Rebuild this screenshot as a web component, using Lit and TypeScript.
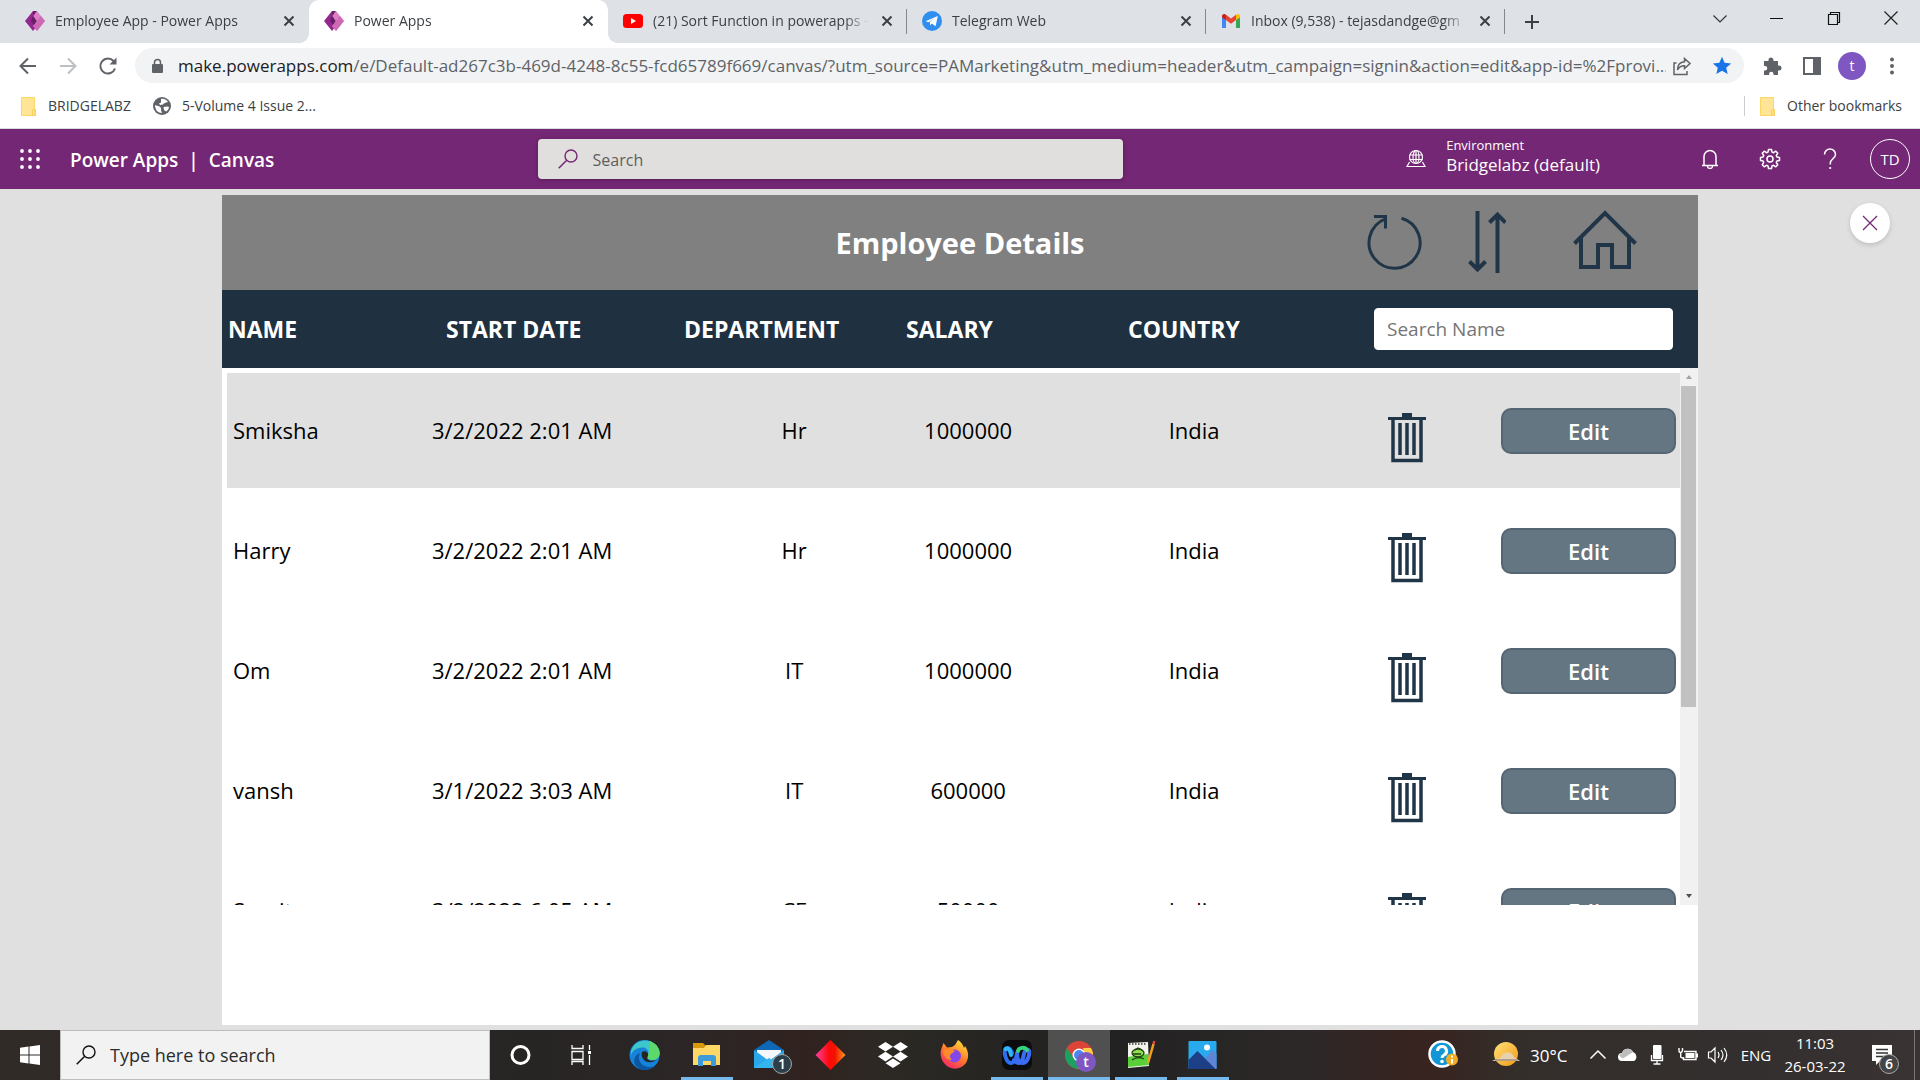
import { LitElement, html, css, svg, nothing } from "lit";
import { customElement } from "lit/decorators.js";
import { classMap } from "lit/directives/class-map.js";

const powerAppsIcon = html`<svg width="20" height="20" viewBox="0 0 20 20" aria-hidden="true">
  <path d="M8 0l4 5-4 5 4 5-4 5L0 10z" fill="#92278f" />
  <path d="M12 0l8 10-8 10-4-5 4-5-4-5z" fill="#dd7fc4" />
  <path d="M8 0h4L8 5l4 5-3 4-3-4 2-5z" fill="#6a1e66" />
  <path d="M12 10l4-5 4 5-8 10-4-5z" fill="#c861ae" opacity=".7" />
</svg>`;

const youtubeIcon = html`<svg width="20" height="20" viewBox="0 0 20 20" aria-hidden="true">
  <rect y="3" width="20" height="14" rx="3.5" fill="#f00" /><path d="M8 7l5 3-5 3z" fill="#fff" />
</svg>`;

const telegramIcon = html`<svg width="20" height="20" viewBox="0 0 20 20" aria-hidden="true">
  <circle cx="10" cy="10" r="10" fill="#2f8ff0" />
  <path d="M3.5 10.2L15.8 5 13.6 15.3 9.8 12.5 8 14.2V11l5-4.2-6.2 4.4z" fill="#fff" />
</svg>`;

const gmailIcon = html`<svg width="20" height="20" viewBox="0 0 20 20" aria-hidden="true">
  <path d="M1 5v12h4V8z" fill="#4285f4" /><path d="M19 5v12h-4V8z" fill="#34a853" />
  <path d="M1 5.5C1 3 3.500 2.500 5 3.700V9L1 6.500z" fill="#c5221f" />
  <path d="M19 5.500C19 3 16.500 2.500 15 3.700V9l4-2.500z" fill="#fbbc04" />
  <path d="M5 3.700L10 7.500l5-3.800V9l-5 3.800L5 9z" fill="#ea4335" />
</svg>`;

const tabCloseIcon = html`<svg width="16" height="16" viewBox="0 0 16 16" aria-hidden="true">
  <path d="M3.500 3.500l9 9m0-9l-9 9" stroke="#3c4043" stroke-width="2" />
</svg>`;

const folderIcon = html`<svg width="17" height="19" viewBox="0 0 17 19" aria-hidden="true">
  <path d="M1.500 .5h13v12h1v6h-14z" fill="#ffe595" stroke="#fbd766" />
  <path d="M12.500 18.500v-5q0-1 1-1h1.500v6z" fill="#ffe595" stroke="#f7cf55" />
</svg>`;

const globeIcon = html`<svg width="18" height="18" viewBox="0 0 18 18" aria-hidden="true">
  <circle cx="9" cy="9" r="9" fill="#5f6368" />
  <path d="M2 8c1.500 1 3 .5 4.500 1.500S8.500 12 8 13s1 1.500 1 3c-4 0-7-3-7-8z" fill="#fff" />
  <path d="M8 2c3-.7 6 1 7 3l-2 .5c-1 1-2.500.5-3 2L7 8 6 6.500l2-1z" fill="#fff" />
  <path d="M10.500 10l4-.5 1.500.5c-.3 2-1.500 3.500-3 4.500L11 13z" fill="#fff" />
</svg>`;

const icons = {
  back: html`<svg width="20" height="20" viewBox="0 0 20 20" aria-hidden="true"><path d="M18 10H3m7-7.500L2.500 10l7.500 7.500" fill="none" stroke="#5f6368" stroke-width="2" /></svg>`,
  forward: html`<svg width="20" height="20" viewBox="0 0 20 20" aria-hidden="true"><path d="M2 10h15m-7-7.500l7.500 7.500-7.500 7.500" fill="none" stroke="#bcbfc3" stroke-width="2" /></svg>`,
  reload: html`<svg width="20" height="20" viewBox="0 0 20 20" aria-hidden="true"><path d="M17 12.500A7.500 7.500 0 1 1 15.500 5L17 6.500" fill="none" stroke="#5f6368" stroke-width="2" /><path d="M18.500 1.500v7h-7z" fill="#5f6368" /></svg>`,
  lock: html`<svg width="14" height="16" viewBox="0 0 14 16" aria-hidden="true"><rect x="2" y="6" width="11" height="9" rx="1" fill="#5f6368" /><path d="M4.500 7V4.500a3 3 0 0 1 6 0V7" fill="none" stroke="#5f6368" stroke-width="1.500" /></svg>`,
  share: html`<svg width="20" height="20" viewBox="0 0 20 20" aria-hidden="true"><path d="M4.500 7H2v11.500h13V15M12.500 2.500l5.500 5-5.500 5V9.700c-3 0-5.500.8-7 4.300 0-5 2.500-8 7-8.300z" fill="none" stroke="#5f6368" stroke-width="1.500" /></svg>`,
  star: html`<svg width="20" height="20" viewBox="0 0 20 20" aria-hidden="true"><path d="M10 .8l2.600 6 6.500.6-4.900 4.300 1.500 6.400L10 14.700l-5.700 3.400 1.500-6.400L.9 7.400l6.500-.6z" fill="#1a73e8" /></svg>`,
  puzzle: html`<svg width="20" height="20" viewBox="0 0 20 20" aria-hidden="true"><path d="M2 5h4.500V4a2.500 2.500 0 0 1 5 0v1H16v4.500h1a2.500 2.500 0 0 1 0 5h-1V19h-4.500v-1a2.200 2.200 0 0 0-4.400 0v1H2v-4.500h1a2.200 2.200 0 0 0 0-4.500H2z" fill="#5f6368" /></svg>`,
  panel: html`<svg width="20" height="20" viewBox="0 0 20 20" aria-hidden="true"><path d="M2 2h16v16H2z" fill="none" stroke="#5f6368" stroke-width="2" /><path d="M11 2h8v16h-8z" fill="#5f6368" /></svg>`,
  dots: html`<svg width="20" height="20" viewBox="0 0 20 20" aria-hidden="true"><g fill="#5f6368"><circle cx="10" cy="3.500" r="2" /><circle cx="10" cy="10" r="2" /><circle cx="10" cy="16.500" r="2" /></g></svg>`,
  plus: html`<svg width="16" height="16" viewBox="0 0 16 16" aria-hidden="true"><path d="M8 1v14M1 8h14" stroke="#3c4043" stroke-width="2" /></svg>`,
  chevron: html`<svg width="16" height="16" viewBox="0 0 16 16" aria-hidden="true"><path d="M1.500 5.500L8 12l6.500-6.500" fill="none" stroke="#333" stroke-width="1.200" /></svg>`,
  minimize: html`<svg width="16" height="16" viewBox="0 0 16 16" aria-hidden="true"><path d="M1 8.500h13" stroke="#111" /></svg>`,
  restore: html`<svg width="16" height="16" viewBox="0 0 16 16" aria-hidden="true"><path d="M2.500 4.500h9v10h-9zM4.500 4.500v-2h9v10h-2" fill="none" stroke="#111" stroke-width="1.200" /></svg>`,
  close: html`<svg width="16" height="16" viewBox="0 0 16 16" aria-hidden="true"><path d="M1.500 1.500l13 13m0-13l-13 13" stroke="#222" stroke-width="1.200" /></svg>`,
  waffle: html`<svg width="20" height="20" viewBox="0 0 20 20" aria-hidden="true"><g fill="#fff">${[2, 10, 18].map((y) => [2, 10, 18].map((x) => svg`<circle cx=${x} cy=${y} r="1.900" />`))}</g></svg>`,
  search: html`<svg width="20" height="20" viewBox="0 0 20 20" aria-hidden="true"><circle cx="13" cy="7" r="6" fill="none" stroke="currentColor" stroke-width="1.400" /><path d="M8.500 11.500L.7 19.300" stroke="currentColor" stroke-width="1.500" /></svg>`,
  environment: html`<svg width="20" height="20" viewBox="0 0 20 20" aria-hidden="true"><g fill="none" stroke="#fff" stroke-width="1.200"><circle cx="10" cy="8" r="6.500" /><ellipse cx="10" cy="8" rx="3" ry="6.500" /><path d="M10 1.500v13M3.500 6h13M3.500 10.500h13M3.500 13L1 17.500h18L16.500 13" /></g></svg>`,
  bell: html`<svg width="20" height="20" viewBox="0 0 20 20" aria-hidden="true"><path d="M2 16.500h16M4 16V7.500a6 6 0 0 1 12 0V16" fill="none" stroke="#fff" stroke-width="1.500" /><path d="M7.500 17a2.500 2.500 0 0 0 5 0" fill="none" stroke="#fff" stroke-width="1.300" /></svg>`,
  gear: html`<svg width="22" height="22" viewBox="0 0 22 22" aria-hidden="true"><g fill="none" stroke="#fff" stroke-width="1.500" stroke-linejoin="round"><circle cx="11" cy="11" r="3" /><path d="M9.500 1.500h3l.5 2.600 1.500.6 2.300-1.500 2 2-1.500 2.300.6 1.500 2.600.5v3l-2.600.5-.6 1.500 1.500 2.300-2 2-2.300-1.500-1.500.6-.5 2.600h-3L9 17.900l-1.500-.6-2.300 1.500-2-2 1.500-2.300-.6-1.500-2.600-.5v-3L4.100 9l.6-1.500-1.500-2.300 2-2 2.300 1.500L9 4.100z" /></g></svg>`,
  help: html`<svg width="20" height="22" viewBox="0 0 20 22" aria-hidden="true"><path d="M4.500 6.500a5.500 5.500 0 0 1 11 0c0 4-5.200 4.500-5.200 8.500v1.500" fill="none" stroke="#fff" stroke-width="1.500" /><circle cx="10.200" cy="20" r="1.100" fill="#fff" /></svg>`,
  closePreview: html`<svg width="16" height="16" viewBox="0 0 16 16" aria-hidden="true"><path d="M1 1l14 14M15 1L1 15" stroke="#742774" stroke-width="1.300" /></svg>`,
  refresh: html`<svg width="56" height="56" viewBox="0 0 56 56" aria-hidden="true"><g fill="none" stroke="#203648" stroke-width="3"><path d="M35.500 4.200A25.500 25.500 0 1 1 19.500 4.900" /><path d="M8 2.500h11.500v12" /></g></svg>`,
  sort: html`<svg width="38" height="62" viewBox="0 0 38 62" aria-hidden="true"><g fill="none" stroke="#203648" stroke-width="4"><path d="M9.500 0v58M1.500 50.500l8 8 8-8M29.500 62V4M21.500 11.500l8-8 8 8" /></g></svg>`,
  home: html`<svg width="64" height="66" viewBox="0 0 64 66" aria-hidden="true"><g fill="none" stroke="#203648" stroke-width="4"><path d="M1.500 34.500L32 4l30.500 30.500" /><path d="M8 29v29h17V36h14v22h17V29" /></g></svg>`,
  trash: html`<svg width="39" height="50" viewBox="0 0 39 50" aria-hidden="true"><path d="M14 0h10v4h14v3H0V4h14z" fill="#203648" /><path d="M5 7v40.500h28V7M12 10v32m7-32v32m7-32v32" fill="none" stroke="#203648" stroke-width="3.500" /></svg>`,
};

const taskIcons: Record<string, unknown> = {
  cortana: svg`<circle cx="15.500" cy="16" r="8.500" fill="none" stroke="#fff" stroke-width="3" />`,
  taskview: svg`<g fill="none" stroke="#fff" stroke-width="1.300"><path d="M5 12.500h11v8H5zM5 6v3.500h11V6M5 26v-3.500h11V26M22.500 6v5M22.500 16v10" /></g><path d="M21 12h3v3h-3z" fill="#fff" />`,
  edge: svg`<circle cx="15.500" cy="16" r="15" fill="#1683d8" /><path d="M2 12C5 2 17-2 26 5c7 6 6 15-2 16-5 0-7-2-5-5 2-6-4-9-9-7-4 1-7 3-8 8z" fill="#3dc7c8" /><path d="M26 5c7 6 6 15-2 16-5 0-7-2-5-5 2-4 2-9 2-14z" fill="#5dd96b" /><path d="M11 14c-4 8 3 17 15 13-6 6-15 5-20-1-2-6 0-10 5-12z" fill="#0c57a4" /><path d="M13 13c4-2 7 1 6 4-3 4 3 6 8 4-3 3-9 3-12 0-2-2-3-5-2-8z" fill="#262424" />`,
  explorer: svg`<path d="M2 4h10l3 3v3H2z" fill="#d99a0a" /><path d="M2 9h11l2-3h14v20H2z" fill="#ffd766" /><path d="M7 27v-8q0-3 3-3h12q3 0 3 3v8h-5v-5h-8v5z" fill="#3d9bdc" />`,
  mail: svg`<path d="M1 11L16 1l15 10v18H1z" fill="#0f68b5" /><path d="M4 11h24v10H4z" fill="#f3f7fb" /><path d="M1 11l15 11L31 11v18H1z" fill="#2aa7e8" /><path d="M1 29l15-10 15 10z" fill="#35b5f0" />`,
  diamond: svg`<defs><linearGradient id="dg"><stop offset="0" stop-color="#ff3fa0" /><stop offset=".45" stop-color="#fb0a0a" /><stop offset=".65" stop-color="#f21300" /><stop offset="1" stop-color="#ff9a20" /></linearGradient></defs><path d="M15.500 1l15 15-15 15-15-15z" fill="url(#dg)" />`,
  dropbox: svg`<g fill="#fff"><path d="M8.500 3l7.500 4.800-7.500 4.800L1 7.800zM23.500 3L31 7.800l-7.500 4.800L16 7.800zM8.500 12.800l7.500 4.800-7.500 4.800L1 17.600zM23.500 12.800l7.500 4.800-7.500 4.800-7.500-4.800zM16 19.500l7.500 4.800L16 29l-7.500-4.700z" /></g>`,
  firefox: svg`<defs><linearGradient id="fx" x1=".8" y1="0" x2=".2" y2="1"><stop offset="0" stop-color="#ffe23c" /><stop offset=".5" stop-color="#ff7a2b" /><stop offset="1" stop-color="#f5206d" /></linearGradient></defs><path d="M3 8l1.500-4L8 8.500l5-.5 3-2 3-5c4 3 5 5 6 8l1-2c4 6 4 12 1 17-6 8-17 7-22 0C1 19 1 12 3 8z" fill="url(#fx)" /><circle cx="15.500" cy="17" r="6.500" fill="#8348e6" /><path d="M4 12c4-3 8-2 12 0l-4 3c-2 2-1 4 1 6-5 0-9-4-9-9z" fill="#ff8a2b" />`,
  webex: svg`<rect x="1" y="1" width="30" height="30" rx="7" fill="#0c0c0e" /><g fill="none" stroke-linecap="round" stroke-width="4"><path d="M16 15c-1 5-2.500 9-6 9-5 0-8-12-5-14s5 1 6 4" stroke="#2d6ff2" /><path d="M4.500 10c3-2 5 2 5.500 6" stroke="#2fb6f5" /><path d="M13 21c4 5 8 3 9-2s2-9 5-8 0 13-5 13-6-6-6-10" stroke="#3a6cf4" /><path d="M17 12c1-4 7-4 9-1" stroke="#37d27a" /></g>`,
  chrome: svg`<circle cx="16" cy="16" r="14" fill="#db4437" /><path d="M3.900 9A14 14 0 0 0 15 30l6-11-11-1z" fill="#1aa260" /><path d="M28 9A14 14 0 0 1 15 30l7-12-2-9z" fill="#ffcd40" /><circle cx="16" cy="16" r="6.500" fill="#fff" /><circle cx="16" cy="16" r="5" fill="#4a88f2" />`,
  notepad: svg`<path d="M3 4l20-1 1 24-21 2z" fill="#f4f4ee" /><path d="M3 18l20-3 1 11-21 2z" fill="#59d038" /><path d="M4 5h18" stroke="#666" stroke-width="2" stroke-dasharray="1.500 1.500" /><ellipse cx="13" cy="14" rx="6" ry="4" fill="#8ce04a" stroke="#223d12" stroke-width="1.300" /><path d="M8 15h8M7 21c4-3 8-3 12-1M10 11l3-2 4 2" fill="none" stroke="#223d12" stroke-width="1.300" /><path d="M28.500 5L23 24" stroke="#f2a01c" stroke-width="2.500" /><path d="M29.300 2l-.8 3" stroke="#d44" stroke-width="2.500" />`,
  photos: svg`<rect x="1.500" y="2" width="28" height="28" rx="1" fill="#29a9ee" /><path d="M29.500 15l-4-4-8 9v10h12z" fill="#5d86d6" /><path d="M1.500 21l9-9 18 18h-27z" fill="#1d3f86" /><circle cx="20" cy="8.500" r="3" fill="#fff" />`,
};

interface Tab { title: string; icon: unknown; active?: boolean; divider?: boolean }
const tabs: Tab[] = [
  { title: "Employee App - Power Apps", icon: powerAppsIcon },
  { title: "Power Apps", icon: powerAppsIcon, active: true },
  { title: "(21) Sort Function in powerapps -", icon: youtubeIcon, divider: true },
  { title: "Telegram Web", icon: telegramIcon, divider: true },
  { title: "Inbox (9,538) - tejasdandge@gm", icon: gmailIcon, divider: true },
];

@customElement("browser-chrome")
export class BrowserChrome extends LitElement {
  static styles = css`
    :host { display: block; font-family: "Open Sans", sans-serif; font-size: 14px; color: #3c4043; background: #fff; }
    button { border: 0; padding: 0; background: none; display: grid; place-items: center; font: inherit; color: inherit; }
    svg { display: block; flex: none; }
    .tabs { display: flex; height: 43px; padding-left: 10px; background: #dee1e6; }
    .tab { flex: 0 1 299px; min-width: 0; display: flex; align-items: center; gap: 10px; padding: 0 12px 2px 15px; box-sizing: border-box; position: relative; height: 43px; }
    .tab.active { background: #fff; border-radius: 10px 10px 0 0; }
    .tab.active::before, .tab.active::after { content: ""; position: absolute; bottom: 0; width: 10px; height: 10px; }
    .tab.active::before { right: 100%; background: radial-gradient(circle at 0 0, transparent 10px, #fff 10px); }
    .tab.active::after { left: 100%; background: radial-gradient(circle at 100% 0, transparent 10px, #fff 10px); }
    .tab.divider { background: linear-gradient(#84878b, #84878b) right center / 1px 25px no-repeat; }
    .title { flex: 1; min-width: 0; overflow: hidden; white-space: nowrap; line-height: 20px; mask-image: linear-gradient(90deg, #000 calc(100% - 24px), transparent); }
    .new-tab { width: 54px; height: 43px; }
    .window { display: flex; margin-left: auto; padding-right: 1px; }
    .window button { width: 57px; height: 36px; }
    .toolbar { display: flex; align-items: center; height: 45px; padding: 0 8px; }
    .nav, .tool { width: 40px; height: 40px; }
    .omnibox { flex: 1; min-width: 0; display: flex; align-items: center; height: 35px; margin: 0 8px 0 7px; padding: 0 6px 0 15px; border-radius: 18px; background: #f1f3f4; }
    .omnibox .tool { width: 32px; }
    .omnibox .tool + .tool { margin-left: 8px; }
    .url { flex: 1; min-width: 0; margin-left: 14px; overflow: hidden; white-space: nowrap; font-size: 17px; line-height: 24px; color: #5f6368; }
    .host { color: #202124; }
    .avatar { width: 28px; height: 28px; margin: 0 6px; border-radius: 50%; background: #7e57c2; color: #fff; }
    .bookmarks { display: flex; align-items: center; height: 40px; padding: 0 18px 0 20px; border-bottom: 1px solid #dadce0; }
    .bookmarks a { display: flex; align-items: center; gap: 11px; margin-right: 22px; color: inherit; text-decoration: none; line-height: 20px; padding-bottom: 4px; }
    .bookmarks .other { margin: 0 0 0 auto; padding-left: 14px; border-left: 1px solid #c9ccd0; padding-bottom: 0; margin-bottom: 4px; }
  `;

  render() {
    return html`
      <div class="tabs" role="tablist">
        ${tabs.map((t) => html`
          <div class=${classMap({ tab: true, active: !!t.active, divider: !!t.divider })} role="tab">
            ${t.icon}<span class="title">${t.title}</span>
            <button aria-label="Close tab">${tabCloseIcon}</button>
          </div>`)}
        <button class="new-tab" aria-label="New tab">${icons.plus}</button>
        <div class="window">
          <button aria-label="Search tabs">${icons.chevron}</button>
          <button aria-label="Minimize">${icons.minimize}</button>
          <button aria-label="Restore">${icons.restore}</button>
          <button aria-label="Close">${icons.close}</button>
        </div>
      </div>
      <div class="toolbar">
        <button class="nav" aria-label="Back">${icons.back}</button>
        <button class="nav" aria-label="Forward">${icons.forward}</button>
        <button class="nav" aria-label="Reload">${icons.reload}</button>
        <div class="omnibox">
          ${icons.lock}
          <div class="url"><span class="host">make.powerapps.com</span>/e/Default-ad267c3b-469d-4248-8c55-fcd65789f669/canvas/?utm_source=PAMarketing&amp;utm_medium=header&amp;utm_campaign=signin&amp;action=edit&amp;app-id=%2Fprovi...</div>
          <button class="tool" aria-label="Share">${icons.share}</button>
          <button class="tool" aria-label="Bookmark this page">${icons.star}</button>
        </div>
        <button class="tool" aria-label="Extensions">${icons.puzzle}</button>
        <button class="tool" aria-label="Side panel">${icons.panel}</button>
        <button class="avatar">t</button>
        <button class="tool" aria-label="Menu">${icons.dots}</button>
      </div>
      <nav class="bookmarks">
        <a href="#">${folderIcon}BRIDGELABZ</a>
        <a href="#">${globeIcon}5-Volume 4 Issue 2...</a>
        <a href="#" class="other">${folderIcon}Other bookmarks</a>
      </nav>
    `;
  }
}

@customElement("suite-header")
export class SuiteHeader extends LitElement {
  static styles = css`
    :host { display: flex; align-items: center; height: 60px; background: #742774; color: #fff; font-family: "Open Sans", sans-serif; }
    button { border: 0; padding: 0; background: none; display: grid; place-items: center; color: inherit; width: 60px; height: 60px; }
    .left { flex: 0 0 28%; display: flex; align-items: center; }
    .right { flex: 1; display: flex; align-items: center; justify-content: flex-end; }
    .brand { display: flex; gap: 10px; padding: 2px 0 0 10px; font-size: 19px; font-weight: 600; line-height: 24px; }
    .brand a { color: inherit; text-decoration: none; }
    .search { flex: 0 1 585px; display: flex; align-items: center; gap: 15px; height: 40px; box-sizing: border-box; padding: 0 20px; border-radius: 4px; background: #e1dfdd; color: #742774; box-shadow: 0 1px 4px rgba(0, 0, 0, .25); }
    .search input { flex: 1; min-width: 0; border: 0; padding: 2px 0 0; outline: 0; background: none; font: 16px/24px "Open Sans", sans-serif; color: #323130; }
    .search input::placeholder { color: #605e5c; opacity: 1; }
    .environment { display: flex; align-items: center; gap: 20px; margin-right: 80px; font-size: 17px; line-height: 20px; }
    .environment div { padding-bottom: 8px; }
    .environment small { display: block; font-size: 13px; }
    .me { width: 40px; height: 40px; margin: 0 10px; border: 1px solid #fff; border-radius: 50%; font: 15px "Open Sans", sans-serif; }
  `;

  render() {
    return html`
      <div class="left">
        <button aria-label="App launcher">${icons.waffle}</button>
        <div class="brand"><a href="#">Power Apps</a><span>|</span><span>Canvas</span></div>
      </div>
      <label class="search">${icons.search}<input type="search" placeholder="Search" aria-label="Search" /></label>
      <div class="right">
        <div class="environment">${icons.environment}<div><small>Environment</small>Bridgelabz (default)</div></div>
        <button aria-label="Notifications">${icons.bell}</button>
        <button aria-label="Settings">${icons.gear}</button>
        <button aria-label="Help">${icons.help}</button>
        <button class="me">TD</button>
      </div>
    `;
  }
}

interface Employee { name: string; start: string; department: string; salary: string; country: string }
const employees: Employee[] = [
  { name: "Smiksha", start: "3/2/2022 2:01 AM", department: "Hr", salary: "1000000", country: "India" },
  { name: "Harry", start: "3/2/2022 2:01 AM", department: "Hr", salary: "1000000", country: "India" },
  { name: "Om", start: "3/2/2022 2:01 AM", department: "IT", salary: "1000000", country: "India" },
  { name: "vansh", start: "3/1/2022 3:03 AM", department: "IT", salary: "600000", country: "India" },
  { name: "Sumit", start: "3/2/2022 6:05 AM", department: "CE", salary: "50000", country: "India" },
];

@customElement("employee-screen")
export class EmployeeScreen extends LitElement {
  static styles = css`
    :host { display: flex; flex-direction: column; min-height: 0; background: #fff; font-family: "Open Sans", sans-serif; }
    button { border: 0; padding: 0; background: none; display: grid; place-items: center; }
    .banner { display: grid; grid-template-columns: 1fr auto 1fr; align-items: center; height: 95px; flex: none; background: #808080; }
    h1 { grid-column: 2; margin: 0; color: #fff; font-size: 29px; line-height: 40px; font-weight: 700; }
    .actions { display: flex; align-items: center; justify-content: flex-end; gap: 46px; padding: 0 61px 2px 0; }
    .actions button:last-child { margin-left: 21px; }
    table { flex: 1; min-height: 0; display: flex; flex-direction: column; margin-bottom: 120px; }
    thead, tbody { display: block; }
    thead { flex: none; background: #1f3040; }
    .head { display: grid; grid-template-columns: 218fr 238fr 222fr 222fr 246fr 299fr; align-items: center; height: 78px; padding: 0 25px 0 6px; }
    th { padding: 0; text-align: left; color: #fff; font-size: 23px; line-height: 30px; font-weight: 700; }
    th input { display: block; width: 100%; height: 42px; box-sizing: border-box; border: 1px solid #fff; border-radius: 4px; padding: 0 12px; font: 19px/26px "Open Sans", sans-serif; background: #fff; }
    th input::placeholder { color: #757575; opacity: 1; }
    tbody { flex: 1; min-height: 0; position: relative; overflow: hidden; padding: 5px 18px 0 5px; }
    .row { display: grid; grid-template-columns: 205fr 180fr 269fr 174fr 278fr 148fr 199fr; align-items: center; height: 115px; margin-bottom: 5px; font-size: 22px; line-height: 30px; color: #000; }
    .row.selected { background: #e0e0e0; }
    td { padding: 0 0 1px; text-align: center; white-space: nowrap; }
    .name { text-align: left; padding-left: 6px; }
    .department { padding-left: 95px; }
    .delete { display: grid; place-items: center; padding-top: 15px; }
    .edit { padding: 0 4px 0 20px; }
    .edit button { width: 100%; height: 46px; box-sizing: border-box; border: 2px solid #566573; border-radius: 10px; background: #657683; color: #fff; font: 600 22px/30px "Open Sans", sans-serif; }
    .scrollbar { position: absolute; top: 0; right: 0; bottom: 0; width: 18px; display: flex; flex-direction: column; align-items: center; justify-content: space-between; background: #f1f1f1; padding: 7px 1px 7px 0; box-sizing: border-box; }
    .scrollbar td { padding: 0; }
    .arrow { border: 3px solid transparent; height: 0; }
    .up { border-bottom: 4px solid #a3a3a3; border-top: 0; }
    .down { border-top: 4px solid #505050; border-bottom: 0; }
    .track { flex: 1; width: 15px; margin: 7px 0; }
    .thumb { height: 64%; background: #c1c1c1; }
  `;

  render() {
    return html`
      <header class="banner">
        <h1>Employee Details</h1>
        <div class="actions">
          <button aria-label="Refresh">${icons.refresh}</button>
          <button aria-label="Sort">${icons.sort}</button>
          <button aria-label="Home">${icons.home}</button>
        </div>
      </header>
      <table>
        <thead>
          <tr class="head">
            <th>NAME</th><th>START DATE</th><th>DEPARTMENT</th><th>SALARY</th><th>COUNTRY</th>
            <th><input type="text" placeholder="Search Name" aria-label="Search Name" /></th>
          </tr>
        </thead>
        <tbody>
          ${employees.map((e, i) => html`
            <tr class=${classMap({ row: true, selected: i === 0 })}>
              <td class="name">${e.name}</td>
              <td>${e.start}</td>
              <td class="department">${e.department}</td>
              <td>${e.salary}</td>
              <td>${e.country}</td>
              <td class="delete"><button aria-label="Delete">${icons.trash}</button></td>
              <td class="edit"><button>Edit</button></td>
            </tr>`)}
          <tr class="scrollbar" aria-hidden="true">
            <td class="arrow up"></td>
            <td class="track"><div class="thumb"></div></td>
            <td class="arrow down"></td>
          </tr>
        </tbody>
      </table>
    `;
  }
}

interface Task { id: string; label: string; running?: boolean; focused?: boolean; badge?: string; mark?: string }
const tasks: Task[] = [
  { id: "cortana", label: "Cortana" },
  { id: "taskview", label: "Task View" },
  { id: "edge", label: "Edge" },
  { id: "explorer", label: "File Explorer", running: true },
  { id: "mail", label: "Mail", badge: "1" },
  { id: "diamond", label: "Git client" },
  { id: "dropbox", label: "Dropbox" },
  { id: "firefox", label: "Firefox" },
  { id: "webex", label: "Webex", running: true },
  { id: "chrome", label: "Chrome", running: true, focused: true, mark: "t" },
  { id: "notepad", label: "Notepad++", running: true },
  { id: "photos", label: "Photos", running: true },
];

@customElement("task-bar")
export class TaskBar extends LitElement {
  static styles = css`
    :host { display: flex; height: 50px; color: #fff; font-family: "Open Sans", sans-serif; background: linear-gradient(90deg, #312b28 0, #272524 28%, #2c2626 36%, #30221f 42%, #2c2924 46%, #212121 57%, #2d2828 68%, #38231f 74%, #332e2a 79%, #332f2e 90%, #393333 100%); }
    button { border: 0; padding: 0; background: none; display: grid; place-items: center; color: inherit; font: inherit; }
    svg { display: block; flex: none; }
    .start { width: 60px; }
    .search { width: 430px; box-sizing: border-box; display: flex; align-items: center; gap: 14px; padding: 0 15px; border: 1px solid #bdbdbd; background: #f2f2f2; color: #111; }
    .search input { flex: 1; min-width: 0; border: 0; padding: 0; outline: 0; background: none; font: 18px/24px "Open Sans", sans-serif; }
    .search input::placeholder { color: #2b2b2b; opacity: 1; }
    .tasks { display: flex; }
    .task { position: relative; width: 62px; }
    .task.running::after { content: ""; position: absolute; left: 5px; right: 5px; bottom: 0; height: 3px; background: #76b9ed; }
    .task.focused { background: #505050; }
    .task.focused::after { left: 0; right: 0; }
    .badge, .mark { position: absolute; display: grid; place-items: center; box-sizing: border-box; width: 20px; height: 20px; border-radius: 50%; left: 34px; top: 24px; font-size: 14px; line-height: 16px; font-weight: 600; }
    .badge { border: 1px solid #a9a9a9; background: #2b3f49; }
    .mark { background: #7e57c2; left: 28px; top: 22px; }
    .tray { display: grid; grid-template-columns: 54px 112px 32px 28px 30px 31px 30px 46px 72px 63px 6px; margin-left: auto; }
    .weather { display: flex; align-items: center; gap: 9px; padding-left: 21px; font-size: 17px; }
    .language { font-size: 15px; }
    .clock { text-align: center; font-size: 15px; line-height: 23px; padding-top: 2px; }
    .notices { position: relative; }
    .notices .badge { left: 28px; background: #444; }
    .peek { border-left: 1px solid #777; }
  `;

  render() {
    return html`
      <button class="start" aria-label="Start"><svg width="20" height="20" viewBox="0 0 20 20" aria-hidden="true"><path d="M0 2.700L8.500 1.500v8H0zM9.500 1.400L20 0v9.500H9.500zM0 10.500h8.500v8L0 17.300zM9.500 10.500H20V20L9.500 18.600z" fill="#fff" /></svg></button>
      <label class="search">${icons.search}<input type="search" placeholder="Type here to search" aria-label="Type here to search" /></label>
      <div class="tasks">
        ${tasks.map((t) => html`
          <button class=${classMap({ task: true, running: !!t.running, focused: !!t.focused })} aria-label=${t.label}>
            <svg width="32" height="32" viewBox="0 0 32 32" aria-hidden="true">${taskIcons[t.id]}</svg>
            ${t.badge ? html`<span class="badge">${t.badge}</span>` : nothing}
            ${t.mark ? html`<span class="mark">${t.mark}</span>` : nothing}
          </button>`)}
      </div>
      <div class="tray">
        <button aria-label="Get help"><svg width="30" height="30" viewBox="0 0 30 30" aria-hidden="true"><circle cx="14" cy="14" r="12.500" fill="#1296d8" stroke="#fff" stroke-width="2.500" /><path d="M9.500 11a4.500 4.500 0 1 1 6.500 4q-2 1-2 3" fill="none" stroke="#fff" stroke-width="3" /><circle cx="14" cy="21.500" r="1.800" fill="#fff" /><circle cx="24" cy="19.500" r="6" fill="#f3ac22" /><path d="M24 19v4.500M24 15.500v2" stroke="#fff" stroke-width="2" /></svg></button>
        <button class="weather"><svg width="30" height="26" viewBox="0 0 30 26" aria-hidden="true"><defs><linearGradient id="sun" x2="1" y2="1"><stop offset="0" stop-color="#ffe27a" /><stop offset="1" stop-color="#f29a13" /></linearGradient></defs><circle cx="15" cy="12" r="12" fill="url(#sun)" /><path d="M1 19h28l-6-4a7 7 0 0 0-13 0z" fill="#e7d0ae" /><path d="M4 18h23" stroke="#a38c77" stroke-width="1.500" /></svg>30°C</button>
        <button aria-label="Show hidden icons"><svg width="18" height="18" viewBox="0 0 18 18" aria-hidden="true"><path d="M1.500 12.500L9 5l7.500 7.500" fill="none" stroke="#fff" stroke-width="1.500" /></svg></button>
        <button aria-label="OneDrive"><svg width="20" height="14" viewBox="0 0 20 14" aria-hidden="true"><path d="M4 13a4 4 0 0 1 0-8 6 6 0 0 1 11-1 5 5 0 0 1 1 9z" fill="#fff" /><path d="M4 5a6 6 0 0 1 11-1L5 10.500Q2 9 1 7z" fill="#bdbdbd" /></svg></button>
        <button aria-label="Microphone"><svg width="14" height="20" viewBox="0 0 14 20" aria-hidden="true"><rect x="3" width="8.500" height="14" rx="1" fill="#fff" /><path d="M1.500 10v5.500h11V10M7 15.500v3M3.500 19h7" fill="none" stroke="#fff" stroke-width="1.300" /></svg></button>
        <button aria-label="Battery"><svg width="20" height="16" viewBox="0 0 20 16" aria-hidden="true"><path d="M6 4.500h12v8H5.500V10M19.300 6.500v4M1 1v2.500q0 2 1.500 2T4.500 3.500V1M2.700 6v4l2.500 1.500" fill="none" stroke="#fff" stroke-width="1.400" /><path d="M7.500 6h9v5h-9z" fill="#fff" /></svg></button>
        <button aria-label="Volume"><svg width="22" height="18" viewBox="0 0 22 18" aria-hidden="true"><path d="M1.500 6H4l4-4v14l-4-4H1.500zM11 6q2 3 0 6M14 4q4 5 0 10M17 2q5.500 7 0 14" fill="none" stroke="#fff" stroke-width="1.200" /></svg></button>
        <button class="language">ENG</button>
        <div class="clock">11:03<br />26-03-22</div>
        <button class="notices" aria-label="Notifications"><svg width="22" height="20" viewBox="0 0 22 20" aria-hidden="true"><path d="M0 0h20v16H8l-4 4v-4H0z" fill="#fff" /><path d="M4 4.500h12M4 8h12M4 11.500h8" stroke="#333" stroke-width="1.300" /></svg><span class="badge">6</span></button>
        <div class="peek"></div>
      </div>
    `;
  }
}

@customElement("app-root")
export class AppRoot extends LitElement {
  static styles = css`
    :host { display: flex; flex-direction: column; height: 100vh; overflow: hidden; background: #e0e0e0; }
    main { position: relative; flex: 1; min-height: 0; display: flex; justify-content: center; padding: 6px 222px 5px; }
    employee-screen { flex: 1; min-width: 0; }
    .close { position: absolute; top: 14px; right: 30px; display: grid; place-items: center; width: 40px; height: 40px; padding: 0; border: 0; border-radius: 50%; background: #fff; box-shadow: 0 2px 5px rgba(0, 0, 0, .15); }
  `;

  render() {
    return html`
      <browser-chrome></browser-chrome>
      <suite-header></suite-header>
      <main>
        <employee-screen></employee-screen>
        <button class="close" aria-label="Close preview">${icons.closePreview}</button>
      </main>
      <task-bar></task-bar>
    `;
  }
}
